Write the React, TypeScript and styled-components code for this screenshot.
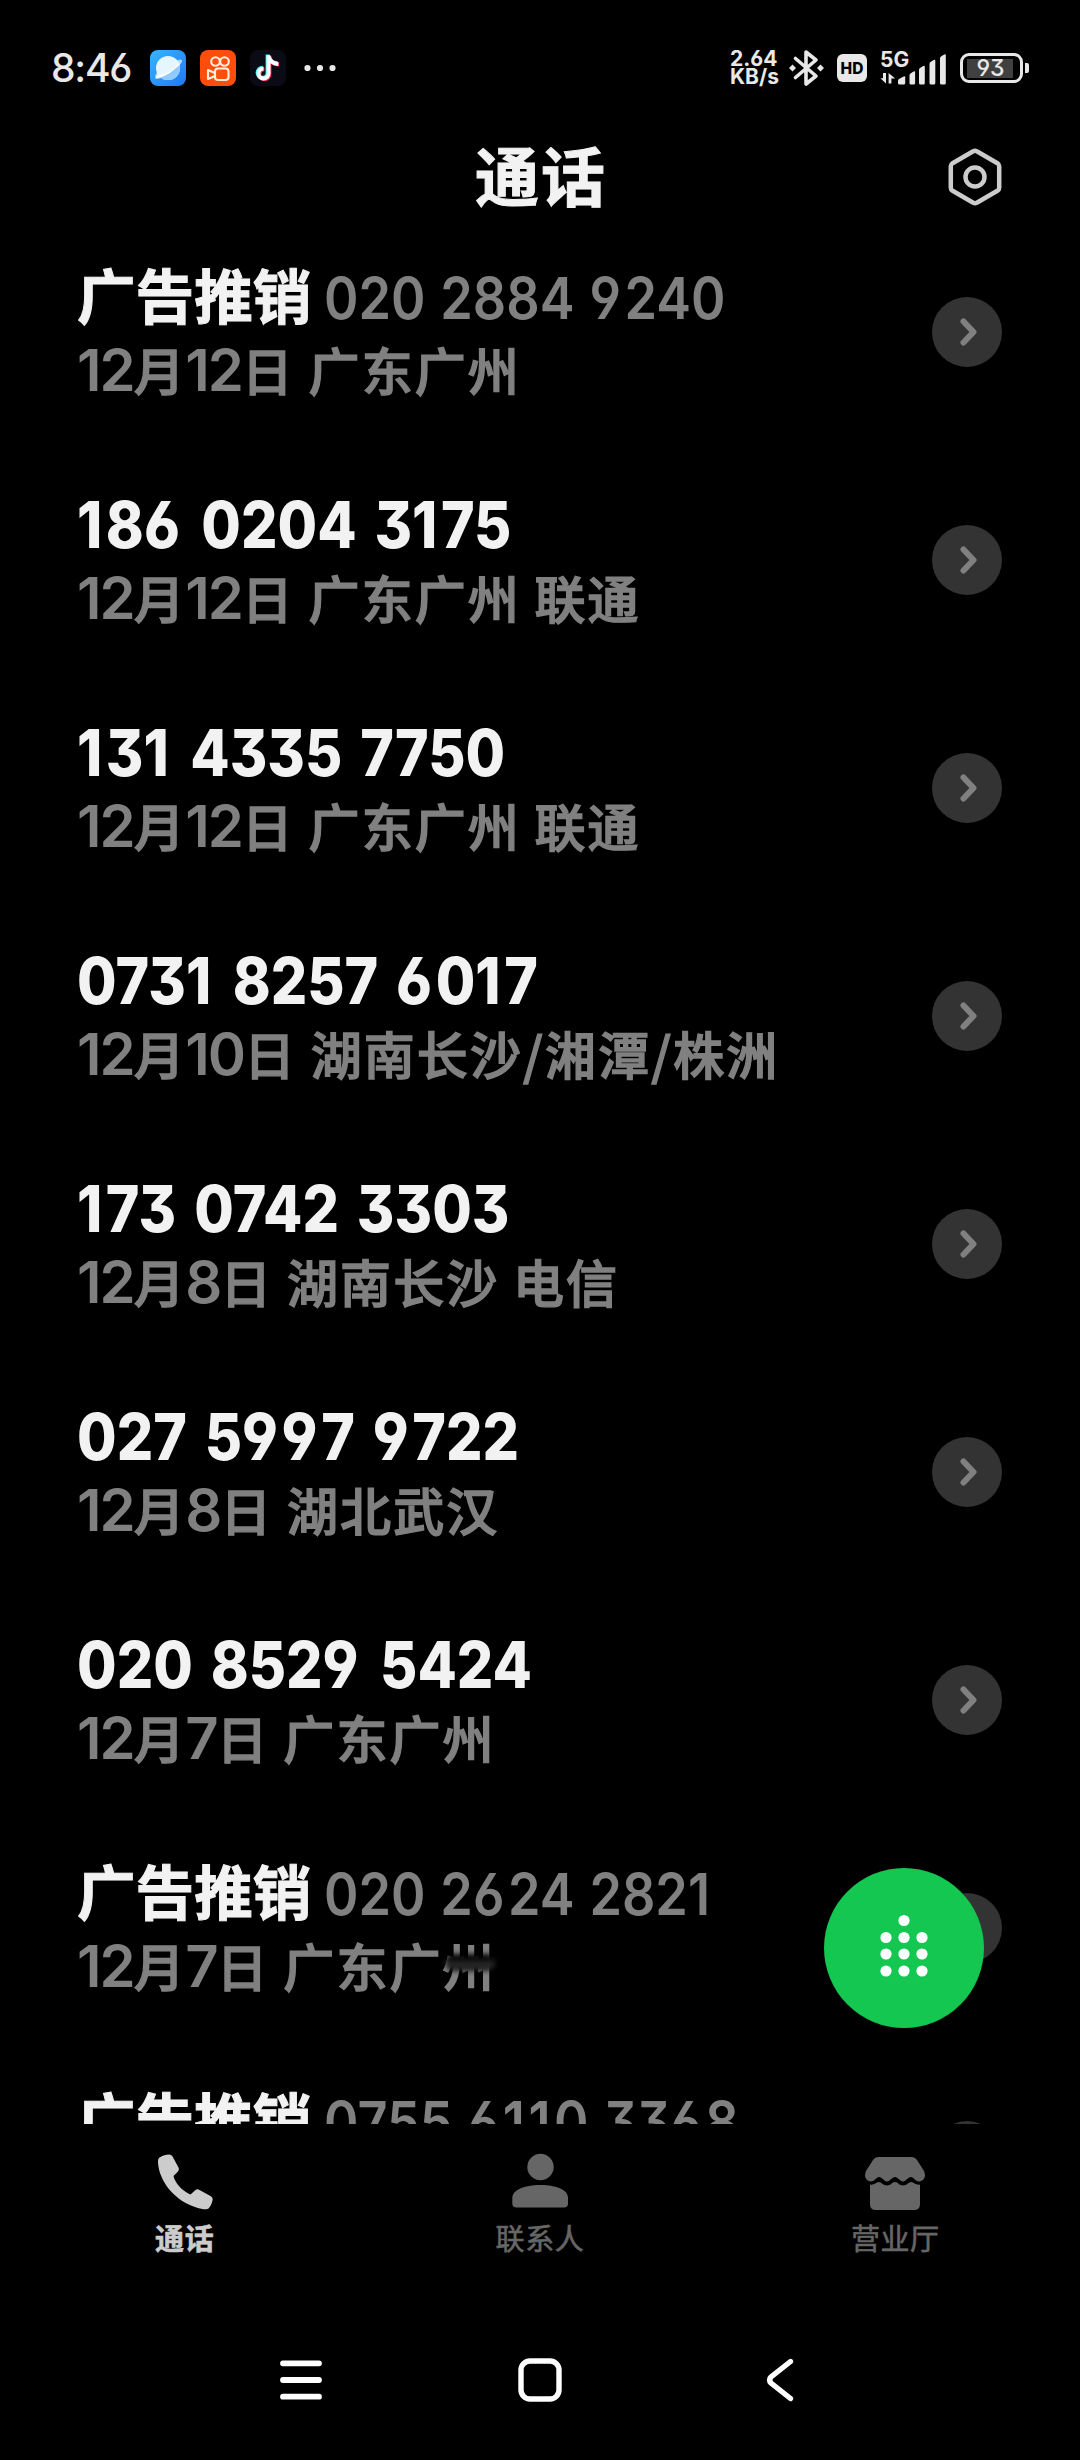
import React from 'react';
import styled, { createGlobalStyle } from 'styled-components';

const LATIN = `Inter, 'Noto Sans CJK SC', sans-serif`;
const HAN = `'Noto Sans CJK SC', sans-serif`;

const Global = createGlobalStyle`
  *, *::before, *::after { box-sizing: border-box; }
  html, body { margin: 0; background: #000; }
  svg { display: block; flex: none; }
`;

const Screen = styled.div`
  position: relative;
  display: flex;
  flex-direction: column;
  width: 1080px;
  height: 2460px;
  overflow: hidden;
  background: #000;
  color: #f2f2f2;
  font-family: ${LATIN};
  font-feature-settings: 'cv03', 'cv04', 'cv09';
`;

/* ---------- status bar ---------- */

const StatusBar = styled.div`
  display: flex;
  justify-content: space-between;
  height: 136px;
  padding: 0 51px;
  color: #e8e8e8;
`;

const StatusSide = styled.div`
  display: flex;
  align-items: center;
  height: 136px;
`;

const Clock = styled.span`
  width: 99px;
  font-size: 39px;
  font-weight: 540;
  letter-spacing: -1.2px;
  line-height: 48px;
  white-space: nowrap;
`;

const AppIcons = styled.div`
  display: flex;
  gap: 14px;
  margin-right: 18px;
`;

const Speed = styled.div`
  display: flex;
  flex-direction: column;
  width: 59px;
  font-size: 21px;
  font-weight: 650;
  line-height: 18px;
  letter-spacing: 0;
  white-space: nowrap;
`;

const HdBadge = styled.span`
  display: flex;
  align-items: center;
  justify-content: center;
  width: 30px;
  height: 28px;
  margin: 0 13px 0 13px;
  border-radius: 6px;
  background: #e8e8e8;
  color: #000;
  font-size: 15.5px;
  font-weight: 800;
`;

const Signal = styled.div`
  display: flex;
  flex-direction: column;
  width: 67px;
  height: 34px;
  margin-right: 13px;
`;

const Generation = styled.span`
  height: 17px;
  font-size: 21px;
  font-weight: 650;
  line-height: 17px;
`;

const BatteryBody = styled.div`
  display: flex;
  align-items: center;
  width: 63px;
  height: 30px;
  padding: 2px 3.5px;
  border: 3.5px solid #e8e8e8;
  border-radius: 9px;
`;

const BatteryLevel = styled.div`
  display: flex;
  align-items: center;
  justify-content: center;
  width: 46px;
  height: 19px;
  background: #404040;
  font-size: 23px;
  font-weight: 500;
  padding-left: 2px;
`;

const BatteryTip = styled.i`
  width: 4px;
  height: 10px;
  margin-left: 2px;
  border-radius: 0 2px 2px 0;
  background: #e8e8e8;
`;

/* ---------- header ---------- */

const Header = styled.header`
  display: grid;
  grid-template-columns: 1fr auto 1fr;
  align-items: center;
  height: 82px;
  padding: 0 77px;
`;

const Title = styled.h1`
  grid-column: 2;
  margin: 0 0 8px 2px;
  font: 700 64px/74px ${HAN};
  letter-spacing: 2px;
  -webkit-text-stroke: 1px currentColor;
`;

const HeaderAction = styled.div`
  justify-self: end;
`;

/* ---------- call list ---------- */

const List = styled.main`
  display: flex;
  flex-direction: column;
  height: 1906px;
  overflow: hidden;
`;

const Row = styled.div`
  display: flex;
  flex: none;
  align-items: center;
  justify-content: space-between;
  height: 228px;
  padding: 0 78px 0 77px;
`;

const Lines = styled.div`
  display: flex;
  flex-direction: column;
`;

const Line = styled.div<{ $muted?: boolean }>`
  display: flex;
  align-items: baseline;
  height: 75px;
  line-height: 75px;
  color: ${(p) => (p.$muted ? '#808080' : '#f2f2f2')};
  white-space: pre;
`;

const Name = styled.span`
  margin-right: 13px;
  font: 700 58.6px/73px ${HAN};
  -webkit-text-stroke: 1px currentColor;
`;

const BigNumber = styled.span`
  font-size: 64px;
  font-weight: 800;
  line-height: 79px;
  word-spacing: 6px;
  transform: scaleX(0.895);
  transform-origin: left;
`;

const SideNumber = styled.span`
  color: #808080;
  font-size: 58px;
  font-weight: 640;
  line-height: 73px;
  word-spacing: 2px;
  transform: scaleX(0.9);
  transform-origin: left;
`;

const Roomy = styled.span`
  letter-spacing: 4px;
`;

const MetaDigits = styled.span`
  font-size: 58px;
  font-weight: 600;
  letter-spacing: -2px;
`;

const MetaHan = styled.span<{ $tight?: boolean }>`
  font: 500 51px/75px ${HAN};
  letter-spacing: ${(p) => (p.$tight ? 0.5 : 2.1)}px;
  -webkit-text-stroke: 1.4px currentColor;
`;

const Smudged = styled.span`
  position: relative;
`;

const Smudge = styled.i`
  position: absolute;
  left: 2px;
  top: 26px;
  width: 50px;
  height: 17px;
  border-radius: 8px;
  background: linear-gradient(#000 20%, #303030 65%, #080808);
  filter: blur(2.5px);
`;

const More = styled.div`
  display: flex;
  align-items: center;
  justify-content: center;
  width: 70px;
  height: 70px;
  padding-left: 3px;
  border-radius: 50%;
  background: #333;
`;

/* ---------- dial button ---------- */

const DialButton = styled.div`
  position: absolute;
  left: 824px;
  top: 1868px;
  width: 160px;
  height: 160px;
  border-radius: 50%;
  background: #13c750;
`;

/* ---------- tabs and system navigation ---------- */

const Tabs = styled.nav`
  display: flex;
  height: 176px;
  padding: 28px 7px 0;
`;

const Tab = styled.div<{ $active?: boolean }>`
  display: flex;
  flex: 1;
  flex-direction: column;
  align-items: center;
  color: ${(p) => (p.$active ? '#cccccc' : '#666666')};
  font: ${(p) => (p.$active ? 700 : 400)} 29px/40px ${HAN};
  letter-spacing: 0.6px;
  -webkit-text-stroke: 0.6px currentColor;
  gap: 5px;
`;

const SystemNav = styled.div`
  display: flex;
  justify-content: center;
  gap: 178px;
  padding-top: 50px;
`;

/* ---------- drawings ---------- */

const PlanetIcon = () => (
  <svg width="36" height="36" viewBox="0 0 36 36">
    <defs>
      <linearGradient id="sky" x1="0" y1="0" x2="1" y2="1">
        <stop offset="0" stopColor="#35b6ff" />
        <stop offset="1" stopColor="#2277f5" />
      </linearGradient>
    </defs>
    <rect width="36" height="36" rx="8" fill="url(#sky)" />
    <path d="M5.5 28.5C4.5 26 6 23 8.5 20L27 10.5C31 8.5 33 9.5 31.5 12.5C27 20 13 30 5.5 28.5Z" fill="#a9dcff" />
    <circle cx="18" cy="18" r="12" fill="#e6f6ff" />
    <path d="M8.5 25.5C16 24 25 18 29.8 15.5C31 24 26 30 18 30C14 30 10.5 28.5 8.5 25.5Z" fill="#8fcbff" />
    <path d="M5.5 28.5C13 28.5 27 20 32 10.5C27 17.5 16 24.5 7 25Z" fill="#fff" />
  </svg>
);

const CameraIcon = () => (
  <svg width="36" height="36" viewBox="0 0 36 36">
    <rect width="36" height="36" rx="8" fill="#ff4d0b" />
    <g fill="none" stroke="#ffeede" strokeWidth="2.1" strokeLinejoin="round">
      <circle cx="15.5" cy="11.5" r="4.3" />
      <circle cx="24.5" cy="11.5" r="4.3" />
      <rect x="15" y="18.5" width="13.5" height="11.5" rx="3" />
      <path d="M15 23L8 20V29L15 26" />
    </g>
  </svg>
);

const NoteIcon = () => {
  const d = 'M18.2 5V23.2A5 5 0 1 1 13.2 18.2M18.2 6C19.5 11 23 13.4 28 13.6';
  return (
    <svg width="36" height="36" viewBox="0 0 36 36">
      <rect width="36" height="36" rx="8" fill="#0a0b14" />
      <g fill="none" strokeWidth="4">
        <path d={d} stroke="#25f4ee" transform="translate(-0.6 -0.4)" />
        <path d={d} stroke="#fe2c55" transform="translate(1.2 1)" />
        <path d={d} stroke="#fff" transform="translate(0.3 0.3)" />
      </g>
    </svg>
  );
};

const DotsIcon = () => (
  <svg width="32" height="8" viewBox="0 0 32 8" fill="#e8e8e8">
    <circle cx="3.5" cy="4" r="3.1" />
    <circle cx="16" cy="4" r="3.1" />
    <circle cx="28.5" cy="4" r="3.1" />
  </svg>
);

const BluetoothIcon = () => (
  <svg width="35" height="40" viewBox="0 0 35 40" fill="none" stroke="#e8e8e8" strokeWidth="3.6" strokeLinejoin="round" strokeLinecap="round">
    <path d="M6.5 10.5L27 28L17 36V4L27 12L6.5 29.5" />
    <path d="M0 20L3.5 16.5L7 20L3.5 23.5ZM28 20L31.5 16.5L35 20L31.5 23.5Z" fill="#e8e8e8" stroke="none" />
  </svg>
);

const BarsIcon = () => (
  <svg width="67" height="17" viewBox="0 0 67 17" fill="#e8e8e8" overflow="visible">
    <path d="M6 5V15.5L0.4 10.2H3V5ZM8.6 15.5V5L15.2 10.4H11.4V15.5Z" />
    <path d="M18 15v-2.2q0-1.2 1-1.8l4.6-2.6q1.6-.8 1.6.8v5.8q0 1.5-1.5 1.5h-4.2q-1.5 0-1.5-1.5Z" />
    <path d="M29.5 15v-7.500q0-1.500 1-2l3-1.900q1.600-.8 1.600.8V15q0 1.500-1.500 1.500H31q-1.500 0-1.500-1.500Z" />
    <path d="M39 15V2q0-1.500 1-2l3.200-1.900q1.600-.8 1.600.8V15q0 1.500-1.500 1.500h-2.800Q39 16.500 39 15Z" />
    <path d="M49.500 15V-4q0-1.500 1-2l3.200-1.900q1.600-.8 1.600.8V15q0 1.500-1.500 1.500H51q-1.500 0-1.500-1.500Z" />
    <path d="M60 15V-9.500q0-1.500 1-2l3.200-1.900q1.600-.8 1.600.8V15q0 1.500-1.500 1.500h-2.800Q60 16.500 60 15Z" />
  </svg>
);

const HexagonIcon = () => (
  <svg width="56" height="60" viewBox="0 0 56 60" fill="none" stroke="#ccc" strokeWidth="4.5" strokeLinejoin="round">
    <path d="M26.2 4.3Q28 3.2 29.8 4.3L50.4 16.2Q52.2 17.3 52.2 19.3V40.7Q52.2 42.7 50.4 43.8L29.8 55.7Q28 56.8 26.2 55.7L5.6 43.8Q3.8 42.7 3.8 40.7V19.3Q3.8 17.3 5.6 16.2Z" />
    <circle cx="28" cy="30" r="9.5" />
  </svg>
);

const ChevronIcon = () => (
  <svg width="20" height="28" viewBox="0 0 20 28" fill="none" stroke="#808080" strokeWidth="6" strokeLinecap="round" strokeLinejoin="round">
    <path d="M4.5 3.5L14.5 14L4.5 24.5" />
  </svg>
);

const KeypadIcon = () => (
  <svg width="160" height="160" viewBox="0 0 160 160" fill="#fff">
    <circle cx="80" cy="52.5" r="5.6" />
    {[69.5, 86, 103].map((y) => [62, 80, 98].map((x) => <circle key={`${x}-${y}`} cx={x} cy={y} r="5.6" />))}
  </svg>
);

const PhoneIcon = () => (
  <svg width="60" height="60" viewBox="0 0 60 60" fill="currentColor">
    <path d="M4.5 5.5C7.5 3.5 11 2.8 14 2.5C16 2.5 17 3.5 17.8 5L23.5 15.5C24.3 17.5 23.8 18.5 22.5 20L18.5 24C20 31 27 39 35.5 42.5L40 38.5C41.5 37.2 42.8 37 44.5 38L55.5 44C57.5 45.2 58 46.5 57.5 48.5C56.8 51.5 55.5 54 54 56C52.5 57.5 50.5 57.5 48.5 57.2C23 53 4 31 3 10.5C3 8.5 3 6.8 4.5 5.5Z" />
  </svg>
);

const PersonIcon = () => (
  <svg width="60" height="60" viewBox="0 0 60 60" fill="currentColor">
    <circle cx="30.5" cy="15" r="13.2" />
    <path d="M2.3 46C2.3 38 14 33 30.5 33S58 38 58 46V51.5Q58 55.5 54 55.5H6.3Q2.3 55.5 2.3 51.5Z" />
  </svg>
);

const StoreIcon = () => (
  <svg width="60" height="60" viewBox="0 0 60 60" fill="currentColor">
    <path d="M14 5H46Q50 5 52 8L59 19Q60 21 60 24Q59 29 54 29.5C50 29.5 49 25 46 25S41 29.5 38 29.5S33 25 30 25S25 29.5 22 29.5S17 25 14 25S10 29.5 6 29.5Q1 29 0 24Q0 21 1 19L8 8Q10 5 14 5Z" />
    <path d="M5 32.5C9 33.5 11 30.5 13.5 30C16.5 30 18 33.5 22 33.5S27 30 30 30S34 33.5 38 33.5S43.5 30 46.5 30C49 30.5 51 33.5 55 32.5V52Q55 58 49 58H11Q5 58 5 52Z" />
  </svg>
);

const MenuIcon = () => (
  <svg width="60" height="60" viewBox="0 0 60 60" stroke="#fff" strokeWidth="5.8" strokeLinecap="round">
    <path d="M11 13.3H47M11 30H47M11 46.7H47" />
  </svg>
);

const HomeIcon = () => (
  <svg width="60" height="60" viewBox="0 0 60 60" fill="none" stroke="#fff" strokeWidth="5.4">
    <rect x="11" y="11" width="38" height="38" rx="9" />
  </svg>
);

const BackIcon = () => (
  <svg width="60" height="60" viewBox="0 0 60 60" fill="none" stroke="#fff" strokeWidth="5.4" strokeLinecap="round">
    <path d="M42.5 11.5L23 27Q20 30 23 33L42.5 48.5" />
  </svg>
);

/* ---------- data ---------- */

interface Call {
  name?: string;
  number: string;
  meta?: string;
  smudged?: boolean;
}

const calls: Call[] = [
  { name: '广告推销', number: '020 2884 9240', meta: '12月12日 广东广州' },
  { number: '186 0204 3175', meta: '12月12日 广东广州 联通' },
  { number: '131 4335 7750', meta: '12月12日 广东广州 联通' },
  { number: '0731 8257 6017', meta: '12月10日 湖南长沙/湘潭/株洲' },
  { number: '173 0742 3303', meta: '12月8日 湖南长沙 电信' },
  { number: '027 5997 9722', meta: '12月8日 湖北武汉' },
  { number: '020 8529 5424', meta: '12月7日 广东广州' },
  { name: '广告推销', number: '020 2624 2821', meta: '12月7日 广东广州', smudged: true },
  { name: '广告推销', number: '0755 6110 3368' },
];

const Digits = ({ value }: { value: string }) => (
  <>{value.split(/([169])/).map((part, i) => (i % 2 ? <Roomy key={i}>{part}</Roomy> : part))}</>
);

const Meta = ({ text, smudged }: { text: string; smudged?: boolean }) => {
  const runs = text.match(/\d+|[^\d]+/g) ?? [];
  return (
    <Line $muted>
      {runs.map((run, i) => {
        if (/\d/.test(run)) return <MetaDigits key={i}>{run}</MetaDigits>;
        if (smudged && i === runs.length - 1) {
          return (
            <MetaHan key={i}>
              {run.slice(0, -1)}
              <Smudged>
                {run.slice(-1)}
                <Smudge />
              </Smudged>
            </MetaHan>
          );
        }
        return (
          <MetaHan key={i} $tight={run === '月'}>
            {run}
          </MetaHan>
        );
      })}
    </Line>
  );
};

export default function App() {
  return (
    <Screen>
      <Global />
      <StatusBar>
        <StatusSide>
          <Clock>8:46</Clock>
          <AppIcons>
            <PlanetIcon />
            <CameraIcon />
            <NoteIcon />
          </AppIcons>
          <DotsIcon />
        </StatusSide>
        <StatusSide>
          <Speed>
            <span>2.64</span>
            <span>KB/s</span>
          </Speed>
          <BluetoothIcon />
          <HdBadge>HD</HdBadge>
          <Signal>
            <Generation>5G</Generation>
            <BarsIcon />
          </Signal>
          <BatteryBody>
            <BatteryLevel>93</BatteryLevel>
          </BatteryBody>
          <BatteryTip />
        </StatusSide>
      </StatusBar>
      <Header>
        <Title>通话</Title>
        <HeaderAction>
          <HexagonIcon />
        </HeaderAction>
      </Header>
      <List>
        {calls.map((call) => (
          <Row key={call.number}>
            <Lines>
              <Line>
                {call.name && <Name>{call.name}</Name>}
                {call.name ? (
                  <SideNumber>
                    <Digits value={call.number} />
                  </SideNumber>
                ) : (
                  <BigNumber>
                    <Digits value={call.number} />
                  </BigNumber>
                )}
              </Line>
              <Meta text={call.meta ?? ''} smudged={call.smudged} />
            </Lines>
            <More>
              <ChevronIcon />
            </More>
          </Row>
        ))}
      </List>
      <Tabs>
        <Tab $active>
          <PhoneIcon />
          通话
        </Tab>
        <Tab>
          <PersonIcon />
          联系人
        </Tab>
        <Tab>
          <StoreIcon />
          营业厅
        </Tab>
      </Tabs>
      <SystemNav>
        <MenuIcon />
        <HomeIcon />
        <BackIcon />
      </SystemNav>
      <DialButton>
        <KeypadIcon />
      </DialButton>
    </Screen>
  );
}
